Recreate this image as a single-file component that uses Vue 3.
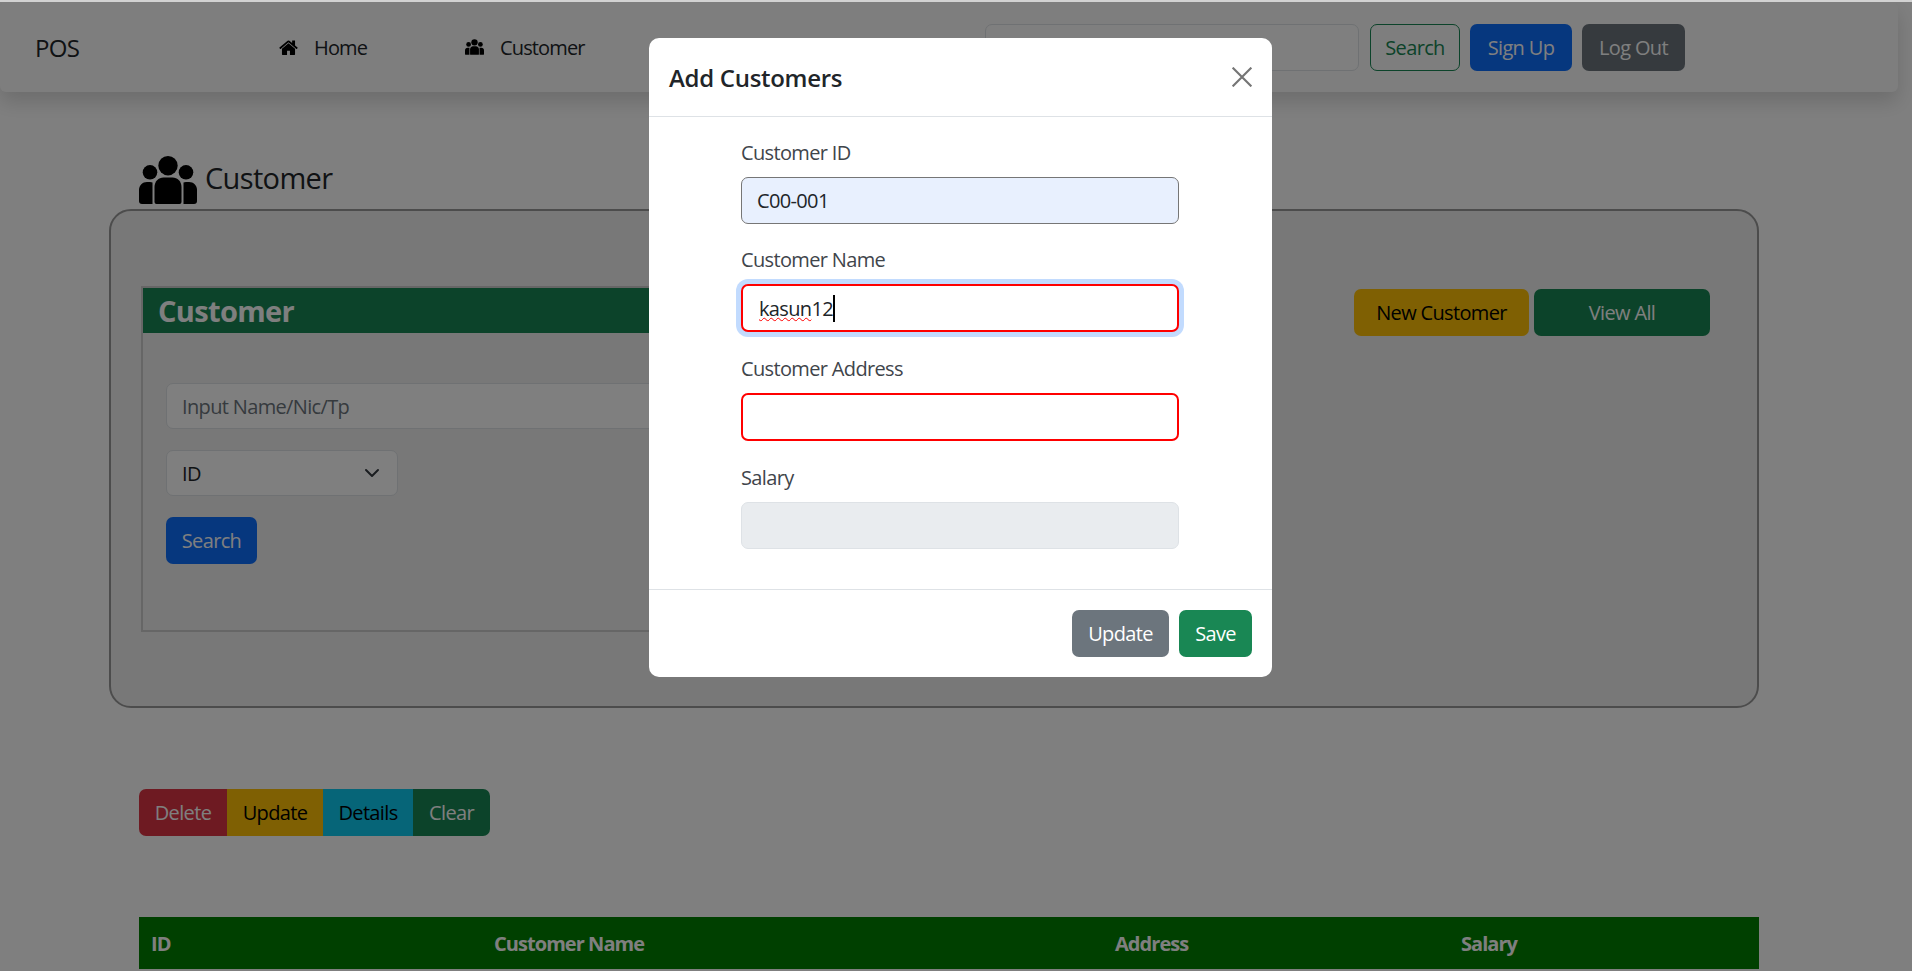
<template>
  <div class="page">
    <div class="top-line"></div>
    <nav class="navbar">
      <a class="brand">POS</a>
      <ul class="nav-links">
        <li v-for="link in links" :key="link.label" :class="link.cls">
          <svg v-if="link.icon === 'home'" class="nav-icon home-icon" viewBox="64 128 1664 1408"><path :d="homePath" /></svg>
          <svg v-else class="nav-icon" viewBox="0 0 58 48"><use href="#users-glyph" /></svg>
          <span>{{ link.label }}</span>
        </li>
      </ul>
      <form class="nav-search" @submit.prevent>
        <input class="control nav-input" type="search" />
        <button class="btn btn-outline-success search-btn">Search</button>
      </form>
      <button class="btn btn-primary signup">Sign Up</button>
      <button class="btn btn-dark-gray logout">Log Out</button>
    </nav>

    <main class="content">
      <h4 class="page-title">
        <svg class="title-icon" viewBox="0 0 58 48">
          <g id="users-glyph">
            <circle cx="29" cy="9.7" r="9.7" />
            <circle cx="11" cy="16.300" r="7.300" />
            <circle cx="47" cy="16.300" r="7.300" />
            <path d="M15.500 31c0-5.500 4-9.500 9-9.500h9c5 0 9 4 9 9.500v15a2 2 0 0 1-2 2h-23a2 2 0 0 1-2-2z" />
            <path d="M13.500 26.500V48H3a3 3 0 0 1-3-3V34c0-4.500 3.500-8 8-8h3c1 0 1.800.2 2.500.5z" />
            <path d="M44.500 26.500V48H55a3 3 0 0 0 3-3V34c0-4.500-3.500-8-8-8h-3c-1 0-1.800.2-2.500.5z" />
          </g>
        </svg>
        <span>Customer</span>
      </h4>

      <section class="panel">
        <div class="search-box">
          <div class="box-title">Customer</div>
          <div class="box-body">
            <input class="control box-input" type="text" placeholder="Input Name/Nic/Tp" />
            <div class="control box-select">
              <span>ID</span>
              <svg class="chevron" viewBox="0 0 16 16"><path d="M2 5l6 6 6-6" /></svg>
            </div>
            <button class="btn btn-primary box-search">Search</button>
          </div>
        </div>
        <div class="panel-actions">
          <button class="btn btn-warning new-btn">New Customer</button>
          <button class="btn btn-success view-btn">View All</button>
        </div>
      </section>

      <div class="btn-group">
        <button class="btn btn-danger">Delete</button>
        <button class="btn btn-warning">Update</button>
        <button class="btn btn-info">Details</button>
        <button class="btn btn-success">Clear</button>
      </div>

      <table class="customer-table">
        <thead>
          <tr>
            <th v-for="col in columns" :key="col.label" :style="{ width: col.width + 'px' }">{{ col.label }}</th>
          </tr>
        </thead>
      </table>
    </main>

    <div class="backdrop"></div>

    <div class="modal">
      <header class="modal-header">
        <h5>Add Customers</h5>
        <svg class="close" viewBox="0 0 16 16"><path d="M.5.5l15 15M15.500.5l-15 15" /></svg>
      </header>
      <div class="modal-body">
        <label class="field-label">Customer ID</label>
        <input class="control field autofilled" type="text" value="C00-001" />

        <label class="field-label">Customer Name</label>
        <div class="control field invalid focused">
          <span class="misspelled">kasun</span><span>12</span><i class="caret"></i>
        </div>

        <label class="field-label">Customer Address</label>
        <input class="control field invalid" type="text" />

        <label class="field-label">Salary</label>
        <input class="control field disabled" type="text" disabled />
      </div>
      <footer class="modal-footer">
        <button class="btn btn-secondary update-btn">Update</button>
        <button class="btn btn-success save-btn">Save</button>
      </footer>
    </div>
  </div>
</template>

<script setup>
const homePath =
  'M1472 992v480q0 26-19 45t-45 19h-384v-384h-256v384h-384q-26 0-45-19t-19-45v-480q0-1 .5-3t.5-3l575-474 575 474q1 2 1 6zm223-69l-62 74q-8 9-21 11h-3q-13 0-21-7l-692-577-692 577q-12 8-24 7-13-2-21-11l-62-74q-8-10-7-23.5t11-21.5l719-599q32-26 76-26t76 26l244 204v-195q0-14 9-23t23-9h192q14 0 23 9t9 23v408l219 182q10 8 11 21.5t-7 23.5z';

const links = [
  { label: 'Home', icon: 'home', cls: 'link-home' },
  { label: 'Customer', icon: 'users', cls: 'link-customer' },
];

const columns = [
  { label: 'ID', width: 343 },
  { label: 'Customer Name', width: 621 },
  { label: 'Address', width: 346 },
  { label: 'Salary', width: 310 },
];
</script>

<style>
html,
body {
  margin: 0;
  background: #fff;
  overflow: hidden;
}
</style>

<style scoped>
.page {
  position: relative;
  width: 1912px;
  height: 971px;
  overflow: hidden;
  font-family: 'Open Sans', 'Liberation Sans', sans-serif;
  font-size: 20px;
  letter-spacing: -0.65px;
  color: #212529;
}

.top-line {
  position: absolute;
  top: 0;
  left: 0;
  right: 0;
  height: 2px;
  background: #d2d2d2;
  z-index: 10;
}

.navbar {
  display: flex;
  align-items: center;
  box-sizing: border-box;
  width: 1898px;
  height: 90px;
  margin-top: 2px;
  padding-left: 35px;
  background: #fcfcfc;
  border-radius: 6px;
  box-shadow: 0 10px 20px rgba(0, 0, 0, 0.15);
}

.brand {
  width: 244px;
  font-size: 24px;
}

.nav-links {
  display: flex;
  margin: 0;
  padding: 0;
  list-style: none;
  letter-spacing: -0.85px;
}

.nav-links li {
  display: flex;
  align-items: center;
  gap: 16px;
}

.link-home {
  width: 186px;
}

.link-customer {
  width: 520px;
}

.nav-icon {
  width: 19px;
  height: 16px;
}

.home-icon {
  width: 19px;
  height: 16px;
}

.btn {
  box-sizing: border-box;
  height: 47px;
  padding: 0 16px;
  border: 1px solid transparent;
  border-radius: 7px;
  font-family: inherit;
  font-size: 20px;
  letter-spacing: inherit;
  color: #fff;
}

.btn-primary {
  background: #0d6efd;
}

.btn-dark-gray,
.btn-secondary {
  background: #6c757d;
}

.btn-success {
  background: #198754;
}

.btn-warning {
  background: #ffc107;
  color: #000;
}

.btn-danger {
  background: #dc3545;
}

.btn-info {
  background: #0dcaf0;
  color: #000;
}

.btn-outline-success {
  background: transparent;
  border-color: #198754;
  color: #198754;
}

.control {
  flex-shrink: 0;
  box-sizing: border-box;
  height: 47px;
  padding: 0 15px;
  background: #fff;
  border: 1px solid #dee2e6;
  border-radius: 7px;
  font-family: inherit;
  font-size: 20px;
  letter-spacing: inherit;
  color: #212529;
  outline: none;
}

.nav-search {
  display: flex;
  gap: 11px;
}

.nav-input {
  width: 374px;
}

.search-btn {
  width: 90px;
  padding: 0;
}

.signup {
  width: 102px;
  margin-left: 10px;
  padding: 0;
}

.logout {
  width: 103px;
  margin-left: 10px;
  padding: 0;
}

.content {
  padding: 0 153px 0 139px;
}

.page-title {
  display: flex;
  gap: 8px;
  height: 49px;
  margin: 64px 0 4px;
  font-size: 29px;
  font-weight: 400;
  line-height: 44px;
}

.title-icon {
  width: 58px;
  height: 48px;
}

.panel {
  display: flex;
  justify-content: space-between;
  box-sizing: border-box;
  width: 1650px;
  height: 499px;
  margin-left: -30px;
  padding: 75px 47px 0 30px;
  background: #f0f0f0;
  border: 2px solid #999;
  border-radius: 22px;
}

.search-box {
  box-sizing: border-box;
  width: 960px;
  height: 346px;
  border: 2px solid #ccc;
}

.box-title {
  height: 45px;
  padding-left: 15px;
  background: #198754;
  color: #fff;
  font-size: 29px;
  font-weight: 700;
  line-height: 45px;
}

.box-body {
  display: flex;
  flex-direction: column;
  align-items: flex-start;
  gap: 21px;
  padding: 50px 0 0 23px;
}

.box-input {
  width: 900px;
  height: 46px;
}

.box-input::placeholder {
  color: #6c757d;
}

.box-select {
  display: flex;
  align-items: center;
  justify-content: space-between;
  width: 232px;
  height: 46px;
  padding-right: 17px;
}

.chevron {
  width: 16px;
  height: 16px;
  fill: none;
  stroke: #343a40;
  stroke-width: 2;
  stroke-linecap: round;
  stroke-linejoin: round;
}

.box-search {
  width: 91px;
  padding: 0;
}

.panel-actions {
  display: flex;
  gap: 5px;
  padding-top: 3px;
}

.new-btn {
  width: 175px;
  padding: 0;
}

.view-btn {
  width: 176px;
  padding: 0;
}

.btn-group {
  display: flex;
  margin-top: 81px;
}

.btn-group .btn {
  padding: 0;
  border-radius: 0;
}

.btn-group .btn:nth-child(1) {
  width: 88px;
  border-radius: 7px 0 0 7px;
}

.btn-group .btn:nth-child(2) {
  width: 96px;
}

.btn-group .btn:nth-child(3) {
  width: 90px;
}

.btn-group .btn:nth-child(4) {
  width: 77px;
  border-radius: 0 7px 7px 0;
}

.customer-table {
  width: 1620px;
  margin-top: 81px;
  border-collapse: collapse;
  table-layout: fixed;
}

.customer-table th {
  box-sizing: border-box;
  height: 52px;
  padding: 0 12px;
  background: #008000;
  color: #fff;
  font-size: 20px;
  font-weight: 700;
  letter-spacing: -0.95px;
  text-align: left;
}

.backdrop {
  position: absolute;
  inset: 0;
  background: rgba(0, 0, 0, 0.5);
}

.modal {
  position: absolute;
  top: 38px;
  left: 649px;
  width: 623px;
  height: 639px;
  background: #fff;
  border-radius: 10px;
}

.modal-header {
  display: flex;
  align-items: center;
  justify-content: space-between;
  box-sizing: border-box;
  height: 79px;
  padding: 0 20px;
  border-bottom: 1px solid #dee2e6;
}

.modal-header h5 {
  margin: 0;
  font-size: 24px;
  font-weight: 600;
  letter-spacing: -0.3px;
}

.close {
  width: 20px;
  height: 20px;
  stroke: #757575;
  stroke-width: 1.7;
}

.modal-body {
  box-sizing: border-box;
  height: 473px;
  padding: 20px 0 0 92px;
  border-bottom: 1px solid #dee2e6;
}

.field-label {
  display: block;
  height: 32px;
  margin-bottom: 8px;
  line-height: 32px;
  color: #3f454b;
}

.field {
  display: block;
  width: 438px;
  margin-bottom: 20px;
}

.autofilled {
  background: #e8f0fe;
  border-color: #767676;
}

.invalid {
  height: 48px;
  margin-bottom: 21px;
  border: 2px solid #f00;
}

.focused {
  display: flex;
  align-items: center;
  padding-left: 16px;
  box-shadow: 0 0 0 5px #c2dbfe;
}

.misspelled {
  text-decoration: underline wavy #f00 1px;
}

.caret {
  width: 2px;
  height: 27px;
  background: #000;
}

.disabled {
  background: #e9ecef;
}

.modal-footer {
  display: flex;
  justify-content: flex-end;
  gap: 10px;
  padding: 20px 20px 0 0;
}

.update-btn {
  width: 97px;
  padding: 0;
}

.save-btn {
  width: 73px;
  padding: 0;
}
</style>
